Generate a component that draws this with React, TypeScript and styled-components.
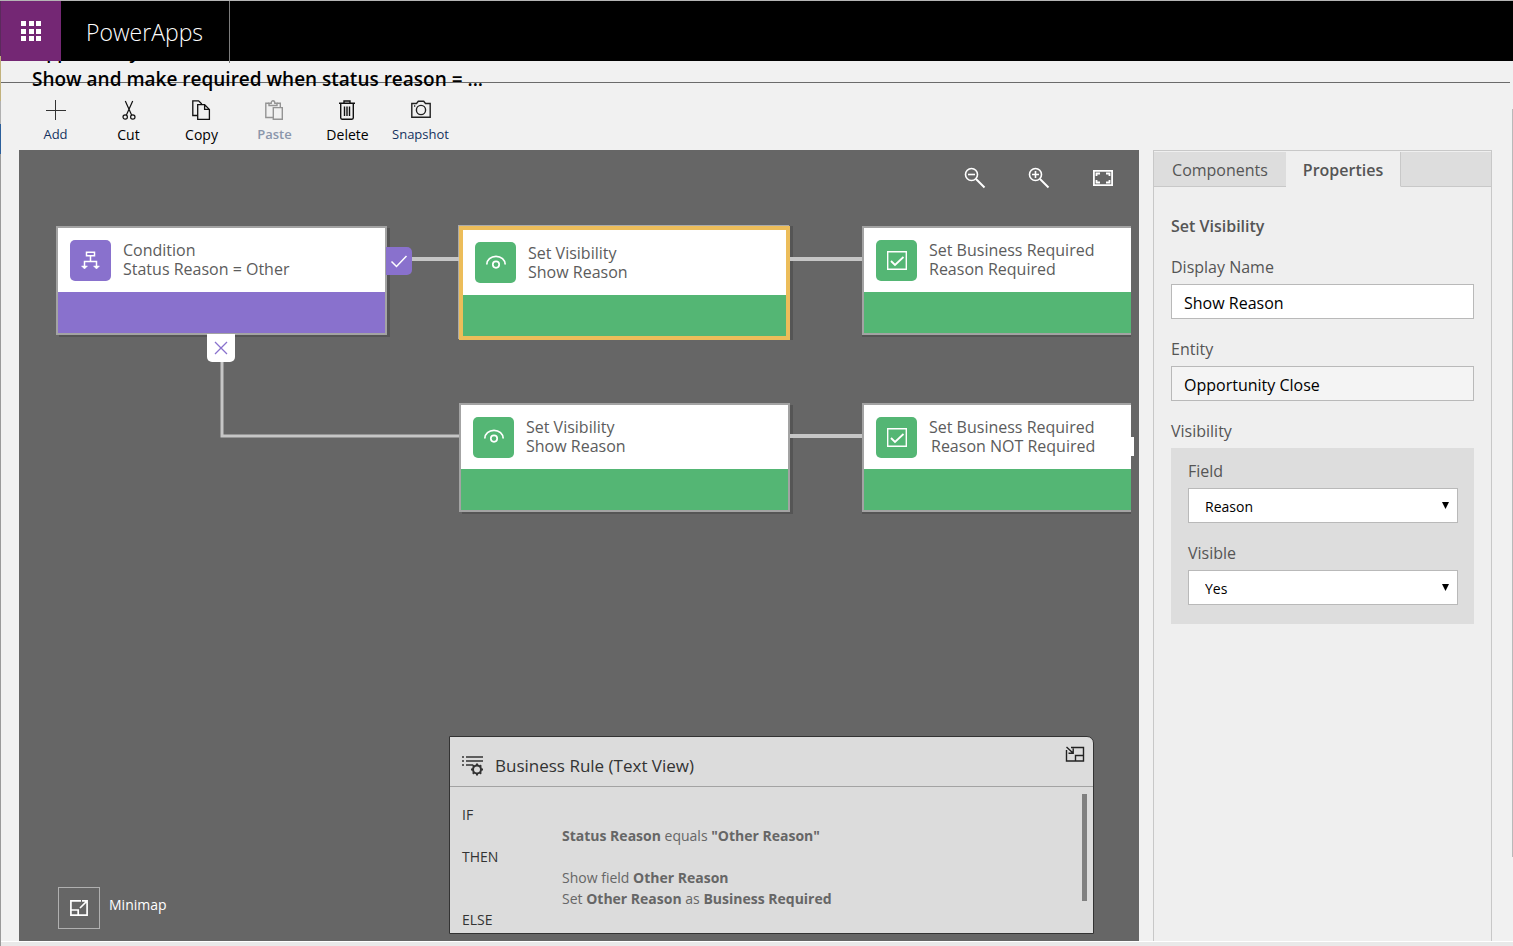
import React from 'react';
import styled, { createGlobalStyle, css } from 'styled-components';

const GlobalStyle = createGlobalStyle`
  *, *::before, *::after { box-sizing: border-box; }
  body {
    margin: 0;
    background: #f1f1f1;
    color: #000;
    font-family: "Open Sans", "Noto Sans", sans-serif;
    font-size: 16px;
    overflow: hidden;
  }
  button, input, select { font-family: inherit; margin: 0; }
  button { background: none; border: 0; padding: 0; cursor: pointer; }
  svg { display: block; flex: none; }
`;

const Page = styled.div`
  position: relative;
  display: flex;
  min-height: 100vh;
  border-top: 1px solid #b5b5b5;
`;

const WindowEdge = styled.div`
  width: 1px;
  flex: none;
  background: linear-gradient(
    #5b2a5c 0 55px, #c2b27c 55px 100px, #b0b0b0 100px 123px,
    #2b5f9b 123px 153px, #9a9a9a 153px
  );
`;

const ScrollTrack = styled.div`
  position: absolute;
  right: 0;
  top: 108px;
  bottom: 89px;
  width: 1px;
  background: #b9b9b9;
`;

const Shell = styled.div`
  flex: 1;
  min-width: 0;
  display: flex;
  flex-direction: column;
`;

const TopBar = styled.header`
  position: relative;
  z-index: 1;
  height: 60px;
  flex: none;
  display: flex;
  background: #000;
`;

const Launcher = styled.button`
  width: 60px;
  height: 60px;
  display: flex;
  align-items: center;
  justify-content: center;
  background: #742774;
`;

const Brand = styled.a`
  display: flex;
  align-items: center;
  height: 62px;
  padding: 0 26px 0 25px;
  border-right: 1px solid #7d7d7d;
  color: #fff;
  font-size: 23px;
  font-weight: 300;
  line-height: 32px;
  text-decoration: none;
`;

const TitleBlock = styled.div`
  height: 22px;
  flex: none;
  margin-right: 3px;
  border-bottom: 1px solid #6b6b6b;
  padding-left: 31px;
  display: flex;
  flex-direction: column;
  justify-content: flex-end;
`;

const EntityName = styled.p`
  margin: 0 0 3px;
  height: 3px;
  flex: none;
  display: flex;
  align-items: flex-end;
  overflow: hidden;
  font-size: 18px;
  font-weight: 600;
  line-height: 24px;
`;

const RuleTitle = styled.h1`
  margin: 0 0 -9px;
  font-size: 19px;
  font-weight: 600;
  line-height: 24px;
  white-space: nowrap;
`;

const Toolbar = styled.nav`
  display: flex;
  height: 67px;
  flex: none;
  padding: 17px 0 0 18px;
`;

const Tool = styled.button<{ $tone?: string; $small?: boolean }>`
  width: 73px;
  display: flex;
  flex-direction: column;
  align-items: center;
  gap: ${(p) => (p.$small ? 4 : 5)}px;
  height: 48px;
  color: ${(p) => p.$tone || '#000'};
  font-size: ${(p) => (p.$small ? 13 : 14)}px;
  line-height: 20px;
  white-space: nowrap;
  &:disabled { font-weight: 600; cursor: default; }
`;

const Workspace = styled.main`
  flex: 1;
  display: flex;
  gap: 14px;
  padding: 0 21px 0 18px;
`;

const Canvas = styled.section`
  position: relative;
  flex: 1;
  min-width: 0;
  overflow: hidden;
  background: #666;
`;

const ZoomTools = styled.div`
  display: flex;
  justify-content: flex-end;
  gap: 40px;
  padding: 16px 24px;
`;

const ZoomButton = styled.button`
  width: 24px;
  height: 24px;
`;

const Wires = styled.svg`
  position: absolute;
  left: 0;
  top: 0;
  pointer-events: none;
`;

type Kind = 'condition' | 'action';
const kindColour = { condition: '#8971cd', action: '#54b674' };

const Node = styled.article<{ $x: number; $y: number; $selected?: boolean; $cut?: boolean }>`
  position: absolute;
  left: ${(p) => p.$x}px;
  top: ${(p) => p.$y}px;
  width: ${(p) => (p.$cut ? 269 : 331)}px;
  height: 109px;
  display: flex;
  flex-direction: column;
  background: #fff;
  border: 2px solid #a3a3a3;
  box-shadow: 3px 2px 0 #555;
  ${(p) => p.$cut && css`
    border-right: 0;
    box-shadow: 0 2px 0 #555;
  `}
  ${(p) => p.$selected && css`
    height: 114px;
    border: 4px solid #ecbd5a;
    box-shadow: 3px 0 0 #555, -1px -1px 0 #aaa;
  `}
`;

const NodeHead = styled.div`
  flex: 1;
  display: flex;
  align-items: center;
  gap: 12px;
  padding-left: 12px;
`;

const NodeTile = styled.div<{ $kind: Kind }>`
  width: 41px;
  height: 41px;
  flex: none;
  display: flex;
  align-items: center;
  justify-content: center;
  border-radius: 5px;
  background: ${(p) => kindColour[p.$kind]};
`;

const NodeText = styled.div`
  flex: none;
  color: #5c5c5c;
  font-size: 16px;
  line-height: 19px;
  white-space: nowrap;
  p { margin: 0; }
`;

const Patch = styled.p`
  width: 205px;
  background: #fff;
  text-indent: 2px;
`;

const NodeBand = styled.div<{ $kind: Kind }>`
  height: 41px;
  background: ${(p) => kindColour[p.$kind]};
`;

const Outcome = styled.div<{ $x: number; $y: number; $yes?: boolean }>`
  position: absolute;
  left: ${(p) => p.$x}px;
  top: ${(p) => p.$y}px;
  width: ${(p) => (p.$yes ? 26 : 28)}px;
  height: 28px;
  display: flex;
  align-items: center;
  justify-content: center;
  background: ${(p) => (p.$yes ? '#8971cd' : '#fff')};
  border-radius: ${(p) => (p.$yes ? '0 5px 5px 0' : '0 0 5px 5px')};
`;

const Minimap = styled.div`
  position: absolute;
  left: 39px;
  bottom: 12px;
  display: flex;
  gap: 9px;
  color: #fff;
  font-size: 14px;
  line-height: 36px;
`;

const MinimapButton = styled.button`
  width: 42px;
  height: 42px;
  display: flex;
  align-items: center;
  justify-content: center;
  border: 1px solid #b0b0b0;
`;

const TextView = styled.section`
  position: absolute;
  right: 45px;
  bottom: 7px;
  width: 645px;
  height: 198px;
  overflow: hidden;
  background: #dcdcdc;
  border: 1px solid #333;
  border-top-right-radius: 7px;
`;

const TextViewHead = styled.div`
  height: 50px;
  display: flex;
  align-items: center;
  gap: 11px;
  padding: 8px 8px 0 12px;
  border-bottom: 1px solid #a3a3a3;
`;

const TextViewTitle = styled.h2`
  flex: 1;
  margin: 0;
  color: #333;
  font-size: 17px;
  font-weight: 500;
  line-height: 24px;
`;

const Collapse = styled.button`
  align-self: flex-start;
`;

const RuleBody = styled.div`
  display: flex;
  justify-content: space-between;
  align-items: flex-start;
  padding: 7px 6px 0 12px;
`;

const RuleList = styled.dl`
  margin: 0;
  padding-top: 10px;
  font-size: 14px;
  line-height: 21px;
  color: #666;
  dt { color: #333; }
  dd { margin: 0 0 0 100px; }
`;

const RuleScroll = styled.div`
  width: 5px;
  height: 107px;
  background: #808080;
`;

const Side = styled.aside`
  width: 339px;
  flex: none;
  background: #efefef;
  border: 1px solid #c8c8c8;
  border-bottom: 0;
`;

const Tabs = styled.div`
  display: flex;
  height: 36px;
  padding-top: 1px;
`;

const Tab = styled.button<{ $active?: boolean }>`
  width: ${(p) => (p.$active ? 115 : 132)}px;
  padding-top: 2px;
  color: #555;
  font-size: 16px;
  line-height: 24px;
  background: #ddd;
  border-bottom: 1px solid #c8c8c8;
  ${(p) => p.$active && css`
    font-weight: 600;
    background: #efefef;
    border-bottom-color: #efefef;
    border-right: 1px solid #c8c8c8;
  `}
`;

const TabRest = styled.div`
  flex: 1;
  background: #ddd;
  border-bottom: 1px solid #c8c8c8;
`;

const Form = styled.form`
  padding: 27px 17px 0;
`;

const FormTitle = styled.h2`
  margin: 0 0 17px;
  color: #555;
  font-size: 16px;
  font-weight: 600;
  line-height: 24px;
`;

const Label = styled.label`
  display: block;
  color: #555;
  font-size: 16px;
  line-height: 24px;
  padding-bottom: 5px;
`;

const GroupLabel = styled.div`
  color: #555;
  font-size: 16px;
  line-height: 24px;
  padding-bottom: 5px;
`;

const Field = styled.div`
  margin-bottom: 18px;
`;

const TextBox = styled.input`
  display: block;
  width: 100%;
  height: 35px;
  padding: 2px 12px 0;
  border: 1px solid #b9b9b9;
  border-radius: 0;
  background: #fff;
  color: #000;
  font-size: 16px;
  &:read-only { background: #f4f4f4; }
`;

const Group = styled.div`
  padding: 11px 16px 1px 17px;
  background: #ddd;
`;

const SelectWrap = styled.div`
  position: relative;
  svg {
    position: absolute;
    right: 9px;
    top: 14px;
    pointer-events: none;
  }
`;

const Select = styled.select`
  display: block;
  width: 100%;
  height: 35px;
  padding: 2px 16px 0;
  border: 1px solid #b9b9b9;
  border-radius: 0;
  background: #fff;
  color: #000;
  font-size: 14px;
  appearance: none;
`;

const StatusStrip = styled.footer`
  height: 5px;
  flex: none;
  border-top: 1px solid #fff;
  background: #e9e9e9;
`;

const Icon = ({ size = 24, h, children, c = 'currentColor', w = 1 }: {
  size?: number; h?: number; children: React.ReactNode; c?: string; w?: number;
}) => (
  <svg width={size} height={h || size} viewBox={`0 0 ${size} ${h || size}`} fill="none" stroke={c} strokeWidth={w} aria-hidden="true">
    {children}
  </svg>
);

const WaffleIcon = () => (
  <Icon size={20} c="none">
    {[0, 8, 15].map((y) => [0, 8, 15].map((x) => (
      <rect key={`${x}-${y}`} x={x} y={y} width="5" height="5" fill="#fff" />
    )))}
  </Icon>
);

const AddIcon = () => (
  <Icon size={20} c="#333"><path d="M9.5 0V20M0 10.5H20" /></Icon>
);

const CutIcon = () => (
  <Icon size={20} c="#111" w={1.2}>
    <path d="M6.3 1 12.6 15M13.7 1 7.4 15" />
    <circle cx="6.2" cy="17" r="2.2" /><circle cx="13.8" cy="17" r="2.2" />
  </Icon>
);

const CopyIcon = () => (
  <Icon size={20} c="#111" w={1.3}>
    <path d="M5.5 15.5H.8V.8H6.6L9.8 4" />
    <path d="M5.7 4.7H12.6L17.4 9.4V19.3H5.7ZM12.6 4.7V9.4H17.4" />
  </Icon>
);

const PasteIcon = () => (
  <Icon size={20} c="#949494" w={1.4}>
    <path d="M8 17.5H.8V3.3H4M12 3.3H15.3V7" />
    <path d="M4 5.5V3.2H6.2C6.2 0 9.8 0 9.8 3.2H12V5.5ZM8.3 7.6H17.3V19.2H8.3Z" />
  </Icon>
);

const DeleteIcon = () => (
  <Icon size={20} c="#111" w={1.4}>
    <path d="M1 3.3H17M6 3V1H12V3M2.7 3.5V17.8Q2.7 19.2 4 19.2H14Q15.3 19.2 15.3 17.8V3.5M6.5 6.5V16M9 6.5V16M11.5 6.5V16" />
  </Icon>
);

const SnapshotIcon = () => (
  <Icon size={20} c="#222" w={1.4}>
    <path d="M.8 3.5H5.5L7.3 1.3H12.7L14.5 3.5H19.2V17.2H.8Z" />
    <circle cx="10" cy="10" r="4.6" /><path d="M3 6H4.3" />
  </Icon>
);

const ZoomIcon = ({ plus }: { plus?: boolean }) => (
  <Icon size={24} c="#fff" w={1.6}>
    <circle cx="8.5" cy="8.5" r="6" /><path d="M13 13 21.5 21.5" strokeWidth="2" />
    <path d={plus ? 'M5 8.5H12M8.5 5V12' : 'M5 8.5H12'} />
  </Icon>
);

const FitIcon = () => (
  <Icon size={24} c="#fff" w={1.8}>
    <path d="M2.9 4.9H21.1V19.1H2.9ZM5.5 10V7.5H9M15 7.5H18.5V10M18.5 14V16.5H15M9 16.5H5.5V14" />
  </Icon>
);

const BranchIcon = () => (
  <Icon size={20} c="#fff" w={1.5}>
    <path d="M5.5 2.2H13.5V5.8H5.5ZM9.5 6V11M3.5 17.5V11.5H15.5V17.5" />
    <path d="M.5 16 3.5 19 6.5 16ZM12.5 16 15.5 19 18.5 16Z" fill="#fff" strokeWidth=".5" />
  </Icon>
);

const EyeIcon = () => (
  <Icon size={22} c="#fff" w={1.7}>
    <path d="M1.8 12.5A9.2 8.2 0 0 1 20.2 12.5" /><circle cx="11" cy="12.6" r="3.2" />
  </Icon>
);

const RequiredIcon = () => (
  <Icon size={22} c="#fff" w={1.4}>
    <path d="M1.7 2.7H20.3V20.3H1.7Z" /><path d="M5 12 9 16 17.5 8" strokeWidth="1.8" />
  </Icon>
);

const RuleIcon = () => (
  <Icon size={22} c="#333" w={1.5}>
    <path d="M0 2H2M4 2H21M0 6H2M4 6H21M0 10H2M4 10H11" />
    <circle cx="15" cy="14.5" r="4" strokeWidth="2" />
    <path d="M15 8.5V10.5M15 18.5V20.5M9 14.5H11M19 14.5H21M10.8 10.3 12.2 11.7M17.8 17.3 19.2 18.7M19.2 10.3 17.8 11.7M12.2 17.3 10.8 18.7" strokeWidth="2" />
  </Icon>
);

const CollapseIcon = () => (
  <Icon size={20} h={18} c="#222" w={1.4}>
    <path d="M6 2.5H18.5V16H1.5V5M10.5 16V10.5H18.5M1.5 2 8 8M3.5 8.2H8.2V3.5" />
  </Icon>
);

const ExpandIcon = () => (
  <Icon size={20} h={18} c="#fff" w={1.7}>
    <path d="M12 1.9H1.9V16.1H18.1V6M1.9 11H9.2V16.1M11 9 18 2M13 1.9H18.1V7" />
  </Icon>
);

const nodeIcon = { branch: <BranchIcon />, eye: <EyeIcon />, required: <RequiredIcon /> };

type RuleNodeProps = {
  x: number; y: number; kind: Kind; icon: keyof typeof nodeIcon;
  title: string; detail: React.ReactNode; selected?: boolean; cut?: boolean;
};

const RuleNode = ({ x, y, kind, icon, title, detail, selected, cut }: RuleNodeProps) => (
  <Node $x={x} $y={y} $selected={selected} $cut={cut}>
    <NodeHead>
      <NodeTile $kind={kind}>{nodeIcon[icon]}</NodeTile>
      <NodeText><p>{title}</p>{typeof detail === 'string' ? <p>{detail}</p> : detail}</NodeText>
    </NodeHead>
    <NodeBand $kind={kind} />
  </Node>
);

const DropDown = ({ id, label, value }: { id: string; label: string; value: string }) => (
  <Field>
    <Label htmlFor={id}>{label}</Label>
    <SelectWrap>
      <Select id={id} defaultValue={value}><option>{value}</option></Select>
      <svg width="7" height="7" viewBox="0 0 7 7" aria-hidden="true"><path d="M0 0H7L3.5 7Z" /></svg>
    </SelectWrap>
  </Field>
);

export default function App() {
  return (
    <>
      <GlobalStyle />
      <Page>
        <WindowEdge />
        <Shell>
          <TopBar>
            <Launcher aria-label="App launcher"><WaffleIcon /></Launcher>
            <Brand href="#">PowerApps</Brand>
          </TopBar>
          <TitleBlock>
            <EntityName>Opportunity</EntityName>
            <RuleTitle>Show and make required when status reason = ...</RuleTitle>
          </TitleBlock>
          <Toolbar>
            <Tool $tone="#14315f" $small><AddIcon />Add</Tool>
            <Tool><CutIcon />Cut</Tool>
            <Tool><CopyIcon />Copy</Tool>
            <Tool $tone="#8a96ab" $small disabled><PasteIcon />Paste</Tool>
            <Tool><DeleteIcon />Delete</Tool>
            <Tool $tone="#14315f" $small><SnapshotIcon />Snapshot</Tool>
          </Toolbar>
          <Workspace>
            <Canvas>
              <ZoomTools>
                <ZoomButton aria-label="Zoom out"><ZoomIcon /></ZoomButton>
                <ZoomButton aria-label="Zoom in"><ZoomIcon plus /></ZoomButton>
                <ZoomButton aria-label="Fit to canvas"><FitIcon /></ZoomButton>
              </ZoomTools>
              <RuleNode x={37} y={76} kind="condition" icon="branch" title="Condition" detail="Status Reason = Other" />
              <RuleNode x={440} y={76} kind="action" icon="eye" title="Set Visibility" detail="Show Reason" selected />
              <RuleNode x={843} y={76} kind="action" icon="required" title="Set Business Required" detail="Reason Required" cut />
              <RuleNode x={440} y={253} kind="action" icon="eye" title="Set Visibility" detail="Show Reason" />
              <RuleNode x={843} y={253} kind="action" icon="required" title="Set Business Required" detail={<Patch>Reason NOT Required</Patch>} cut />
              <Wires width="860" height="300" fill="none" stroke="#c6c6c6" strokeWidth="4" aria-hidden="true">
                <path d="M392 109H440M771 109H843M771 286H843" />
                <path d="M203 210V286H440" strokeWidth="3" />
              </Wires>
              <Outcome $x={367} $y={97} $yes>
                <Icon size={18} c="#fff" w={1.5}><path d="M1.5 9.5 6.5 14.5 16.5 4" /></Icon>
              </Outcome>
              <Outcome $x={188} $y={184}>
                <Icon size={14} c="#8971cd" w={1.3}><path d="M1 1 13 13M13 1 1 13" /></Icon>
              </Outcome>
              <Minimap>
                <MinimapButton aria-label="Open minimap"><ExpandIcon /></MinimapButton>
                <span>Minimap</span>
              </Minimap>
              <TextView>
                <TextViewHead>
                  <RuleIcon />
                  <TextViewTitle>Business Rule (Text View)</TextViewTitle>
                  <Collapse aria-label="Collapse text view"><CollapseIcon /></Collapse>
                </TextViewHead>
                <RuleBody>
                  <RuleList>
                    <dt>IF</dt>
                    <dd><b>Status Reason</b> equals <b>"Other Reason"</b></dd>
                    <dt>THEN</dt>
                    <dd>Show field <b>Other Reason</b></dd>
                    <dd>Set <b>Other Reason</b> as <b>Business Required</b></dd>
                    <dt>ELSE</dt>
                  </RuleList>
                  <RuleScroll />
                </RuleBody>
              </TextView>
            </Canvas>
            <Side>
              <Tabs role="tablist">
                <Tab role="tab" aria-selected="false">Components</Tab>
                <Tab role="tab" aria-selected="true" $active>Properties</Tab>
                <TabRest />
              </Tabs>
              <Form>
                <FormTitle>Set Visibility</FormTitle>
                <Field>
                  <Label htmlFor="display-name">Display Name</Label>
                  <TextBox id="display-name" defaultValue="Show Reason" />
                </Field>
                <Field>
                  <Label htmlFor="entity">Entity</Label>
                  <TextBox id="entity" value="Opportunity Close" readOnly />
                </Field>
                <GroupLabel id="visibility-group">Visibility</GroupLabel>
                <Group role="group" aria-labelledby="visibility-group">
                  <DropDown id="field" label="Field" value="Reason" />
                  <DropDown id="visible" label="Visible" value="Yes" />
                </Group>
              </Form>
            </Side>
          </Workspace>
          <StatusStrip />
        </Shell>
        <ScrollTrack />
      </Page>
    </>
  );
}
